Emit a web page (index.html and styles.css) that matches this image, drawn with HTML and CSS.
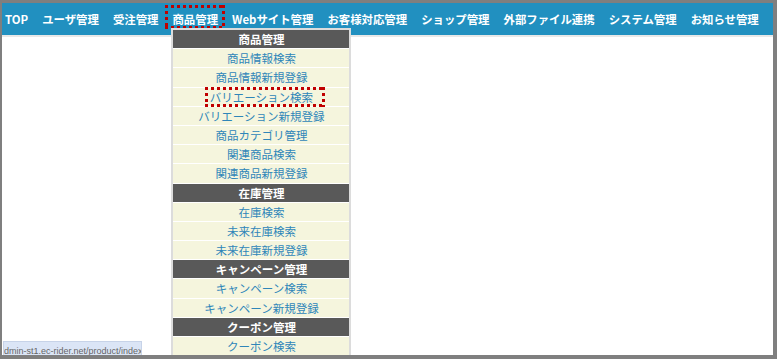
FILE: index.html
```html
<!DOCTYPE html>
<html lang="ja">
<head>
  <meta charset="UTF-8" />
  <title>管理画面</title>
  <meta name="viewport" content="width=device-width, initial-scale=1.0">
  <link rel="stylesheet" href="styles.css">
</head>
<body>

  <div class="screen">
    <nav class="gnav">
      <ul class="gnav-list">
        <li class="gnav-item first"><a href="#">TOP</a></li>
        <li class="gnav-item"><a href="#">ユーザ管理</a></li>
        <li class="gnav-item"><a href="#">受注管理</a></li>
        <li class="gnav-item open">
          <a href="#" class="mark">商品管理</a>

          <div class="dropdown">
            <div class="dd-head">商品管理</div>
            <a href="#" class="dd-item">商品情報検索</a>
            <a href="#" class="dd-item">商品情報新規登録</a>
            <a href="#" class="dd-item mark-row">バリエーション検索</a>
            <a href="#" class="dd-item">バリエーション新規登録</a>
            <a href="#" class="dd-item">商品カテゴリ管理</a>
            <a href="#" class="dd-item">関連商品検索</a>
            <a href="#" class="dd-item">関連商品新規登録</a>

            <div class="dd-head">在庫管理</div>
            <a href="#" class="dd-item">在庫検索</a>
            <a href="#" class="dd-item">未来在庫検索</a>
            <a href="#" class="dd-item">未来在庫新規登録</a>

            <div class="dd-head">キャンペーン管理</div>
            <a href="#" class="dd-item">キャンペーン検索</a>
            <a href="#" class="dd-item">キャンペーン新規登録</a>

            <div class="dd-head">クーポン管理</div>
            <a href="#" class="dd-item">クーポン検索</a>
            <a href="#" class="dd-item">クーポン新規登録</a>
          </div>
        </li>
        <li class="gnav-item"><a href="#">Webサイト管理</a></li>
        <li class="gnav-item"><a href="#">お客様対応管理</a></li>
        <li class="gnav-item"><a href="#">ショップ管理</a></li>
        <li class="gnav-item"><a href="#">外部ファイル連携</a></li>
        <li class="gnav-item"><a href="#">システム管理</a></li>
        <li class="gnav-item"><a href="#">お知らせ管理</a></li>
      </ul>
    </nav>

    <div class="status">dmin-st1.ec-rider.net/product/index</div>
  </div>

</body>
</html>
```

FILE: styles.css
```css
:root {
  --nav-blue: #2190c0;
  --head-gray: #595959;
  --item-bg: #f5f5dd;
  --item-text: #2f86b9;
  --mark-red: #c00000;
}

body {
  margin: 0;
  padding: 0;
  font-family: "Noto Sans CJK JP", "Noto Sans", sans-serif;
}

.screen {
  width: 777px;
  height: 359px;
  box-sizing: border-box;
  border: solid #7f7f7f;
  border-width: 3px 4px 4px 2px;
  background: #fff;
  position: relative;
  overflow: hidden;
}

/* global nav */
.gnav {
  background: var(--nav-blue);
  height: 32px;
  border-bottom: 2px solid #e8e8e8;
}

.gnav-list {
  display: flex;
  margin: 0;
  padding: 0;
  list-style: none;
}

.gnav-item > a {
  display: block;
  padding: 0 7px;
  line-height: 32px;
  color: #fff;
  font-size: 11.4px;
  font-weight: bold;
  text-decoration: none;
  white-space: nowrap;
}

.gnav-item.first > a {
  padding-left: 3px;
}

.gnav-item.open {
  position: relative;
  z-index: 2;
}

/* red dotted annotation boxes */
.mark,
.mark-row {
  position: relative;
}

.mark::after,
.mark-row::after {
  content: "";
  position: absolute;
  background:
    repeating-linear-gradient(90deg, var(--mark-red) 0 3px, transparent 3px 6px) top / 100% 3px no-repeat,
    repeating-linear-gradient(90deg, var(--mark-red) 0 3px, transparent 3px 6px) bottom / 100% 3px no-repeat,
    repeating-linear-gradient(180deg, var(--mark-red) 0 3px, transparent 3px 6px) left / 3px 100% no-repeat,
    repeating-linear-gradient(180deg, var(--mark-red) 0 3px, transparent 3px 6px) right / 3px 100% no-repeat;
  pointer-events: none;
}

.mark::after {
  top: 2px;
  bottom: 6px;
  left: 0;
  right: 0;
}

.mark-row::after {
  top: -1px;
  bottom: -1px;
  left: 32px;
  right: 24px;
}

/* dropdown */
.dropdown {
  position: absolute;
  left: 6px;
  top: 25px;
  width: 176px;
  border: 2px solid #dcdcdc;
  background: #fff;
  display: grid;
  grid-auto-rows: 18.2px;
  gap: 1px;
}

.dd-head,
.dd-item {
  display: block;
  font-size: 11.5px;
  line-height: 18px;
  text-align: center;
  white-space: nowrap;
}

.dd-head {
  background: var(--head-gray);
  color: #fff;
  font-weight: bold;
}

.dd-item {
  background: var(--item-bg);
  color: var(--item-text);
  text-decoration: none;
}

/* browser status tooltip */
.status {
  position: absolute;
  left: 1px;
  bottom: -8px;
  width: 137px;
  height: 17px;
  padding: 3px 0 0 0;
  background: #dbe5f6;
  border: 1px solid #c7d3e8;
  color: #666;
  font-family: "Liberation Sans", sans-serif;
  font-size: 9px;
  line-height: 12px;
  overflow: hidden;
  white-space: nowrap;
}
```
